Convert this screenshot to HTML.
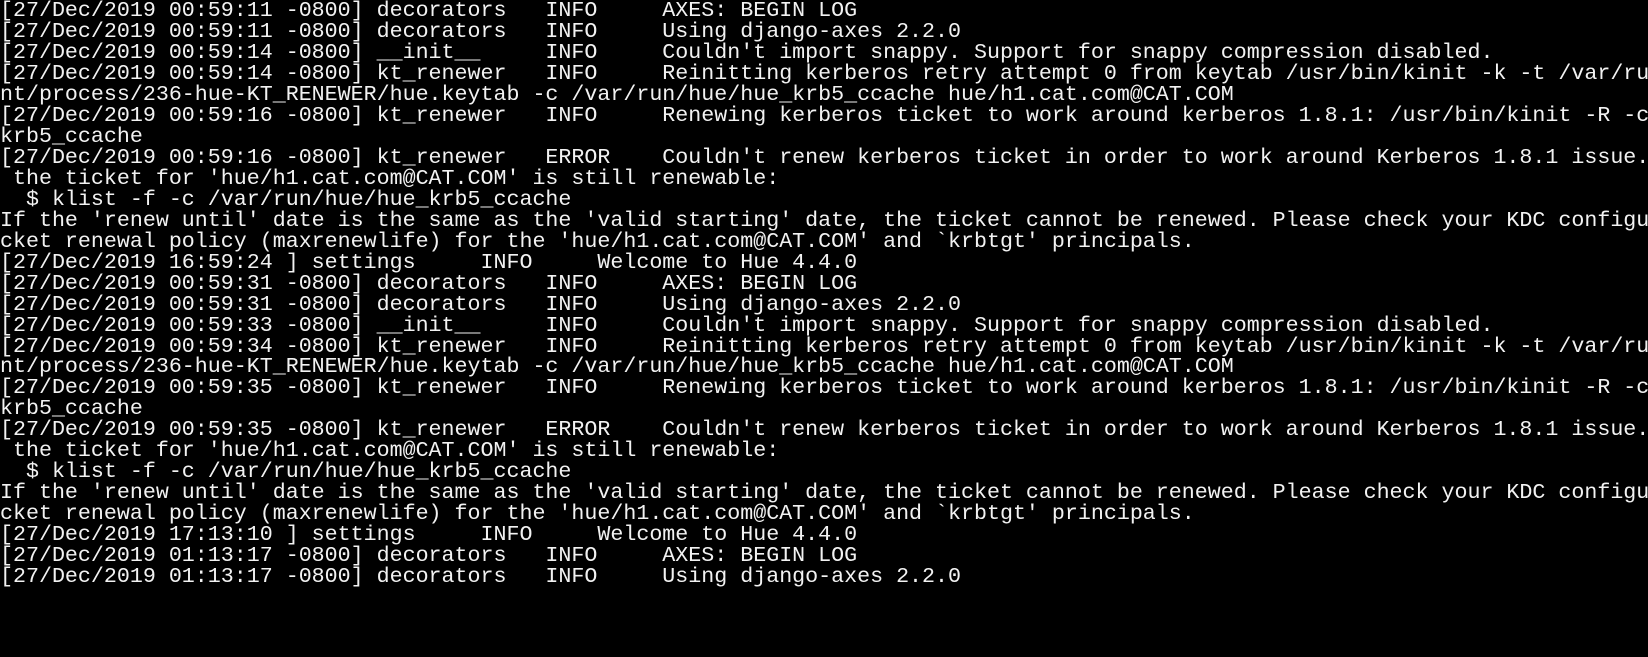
<!DOCTYPE html>
<html><head><meta charset="utf-8"><style>
html,body{margin:0;padding:0;background:#000;width:1648px;height:657px;overflow:hidden}
pre{margin:0;padding:1px 0 0 0;font-family:"Liberation Mono",monospace;font-size:21.65px;line-height:20.97px;color:#f2f2f2;white-space:pre}
</style></head><body><pre>[27/Dec/2019 00:59:11 -0800] decorators   INFO     AXES: BEGIN LOG
[27/Dec/2019 00:59:11 -0800] decorators   INFO     Using django-axes 2.2.0
[27/Dec/2019 00:59:14 -0800] __init__     INFO     Couldn't import snappy. Support for snappy compression disabled.
[27/Dec/2019 00:59:14 -0800] kt_renewer   INFO     Reinitting kerberos retry attempt 0 from keytab /usr/bin/kinit -k -t /var/ru
nt/process/236-hue-KT_RENEWER/hue.keytab -c /var/run/hue/hue_krb5_ccache hue/h1.cat.com@CAT.COM
[27/Dec/2019 00:59:16 -0800] kt_renewer   INFO     Renewing kerberos ticket to work around kerberos 1.8.1: /usr/bin/kinit -R -c
krb5_ccache
[27/Dec/2019 00:59:16 -0800] kt_renewer   ERROR    Couldn't renew kerberos ticket in order to work around Kerberos 1.8.1 issue.
 the ticket for 'hue/h1.cat.com@CAT.COM' is still renewable:
  $ klist -f -c /var/run/hue/hue_krb5_ccache
If the 'renew until' date is the same as the 'valid starting' date, the ticket cannot be renewed. Please check your KDC configu
cket renewal policy (maxrenewlife) for the 'hue/h1.cat.com@CAT.COM' and `krbtgt' principals.
[27/Dec/2019 16:59:24 ] settings     INFO     Welcome to Hue 4.4.0
[27/Dec/2019 00:59:31 -0800] decorators   INFO     AXES: BEGIN LOG
[27/Dec/2019 00:59:31 -0800] decorators   INFO     Using django-axes 2.2.0
[27/Dec/2019 00:59:33 -0800] __init__     INFO     Couldn't import snappy. Support for snappy compression disabled.
[27/Dec/2019 00:59:34 -0800] kt_renewer   INFO     Reinitting kerberos retry attempt 0 from keytab /usr/bin/kinit -k -t /var/ru
nt/process/236-hue-KT_RENEWER/hue.keytab -c /var/run/hue/hue_krb5_ccache hue/h1.cat.com@CAT.COM
[27/Dec/2019 00:59:35 -0800] kt_renewer   INFO     Renewing kerberos ticket to work around kerberos 1.8.1: /usr/bin/kinit -R -c
krb5_ccache
[27/Dec/2019 00:59:35 -0800] kt_renewer   ERROR    Couldn't renew kerberos ticket in order to work around Kerberos 1.8.1 issue.
 the ticket for 'hue/h1.cat.com@CAT.COM' is still renewable:
  $ klist -f -c /var/run/hue/hue_krb5_ccache
If the 'renew until' date is the same as the 'valid starting' date, the ticket cannot be renewed. Please check your KDC configu
cket renewal policy (maxrenewlife) for the 'hue/h1.cat.com@CAT.COM' and `krbtgt' principals.
[27/Dec/2019 17:13:10 ] settings     INFO     Welcome to Hue 4.4.0
[27/Dec/2019 01:13:17 -0800] decorators   INFO     AXES: BEGIN LOG
[27/Dec/2019 01:13:17 -0800] decorators   INFO     Using django-axes 2.2.0</pre></body></html>
